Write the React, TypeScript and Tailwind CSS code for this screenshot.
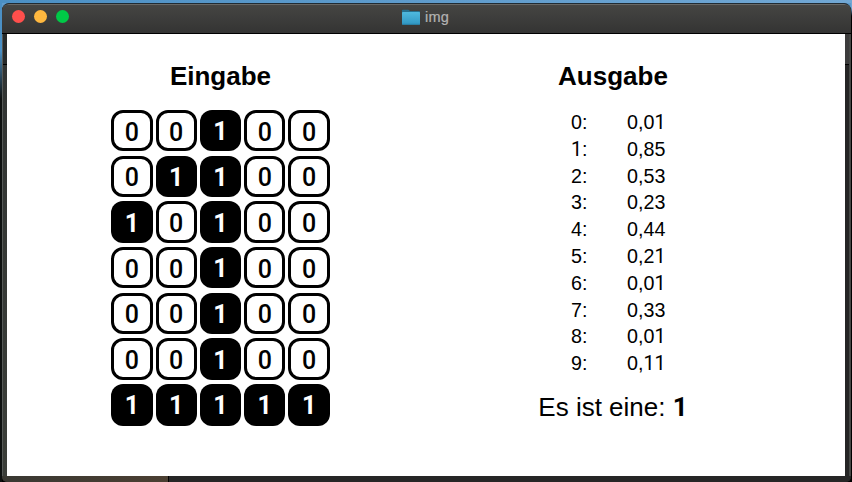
const grid = ["00100", "01100", "10100", "00100", "00100", "00100", "11111"];

const results = ["0,01", "0,85", "0,53", "0,23", "0,44", "0,21", "0,01", "0,33", "0,01", "0,11"];

function FolderIcon() {
  return (
    <svg width="18" height="16" viewBox="0 0 18 16" className="shrink-0">
      <defs>
        <linearGradient id="folder" x1="0" y1="0" x2="0" y2="1">
          <stop offset="0" stopColor="#4fb9df" />
          <stop offset="1" stopColor="#3097c3" />
        </linearGradient>
      </defs>
      <path d="M0 1.5Q0 .7.8.7H6.4L8 2.1H17.2Q18 2.1 18 3V6H0Z" fill="#25708f" />
      <rect x="0" y="3" width="18" height="12.7" rx="0.7" fill="url(#folder)" />
      <path d="M0 15.3H18" stroke="#287fa4" strokeWidth="0.8" />
    </svg>
  );
}

function TitleBar() {
  return (
    <header className="flex h-[30px] shrink-0 rounded-t-md border-t border-b border-t-[#686866] border-b-black bg-linear-to-b from-[#454543] to-[#343433]">
      <div className="flex w-[400px] gap-[9px] pt-[5px] pl-[10px]">
        <span className="size-[13px] rounded-full bg-[#ff4f4c]" />
        <span className="size-[13px] rounded-full bg-[#ffb83f]" />
        <span className="size-[13px] rounded-full bg-[#00c947]" />
      </div>
      <div className="flex h-[23px] items-center gap-[5px] text-[14.5px] leading-none text-[#b3b3b2]">
        <FolderIcon />
        <span className="pt-px tracking-[0.2px] [-webkit-text-stroke:0.2px_#b3b3b2]">img</span>
      </div>
    </header>
  );
}

function Cell({ value }: { value: string }) {
  return (
    <div
      className={
        value === "1"
          ? "flex h-[41.4px] w-[41.2px] items-center justify-center rounded-[12px] bg-black pt-[2px] font-[Roboto] text-[25px] leading-none font-bold text-white"
          : "flex h-[41.4px] w-[41.2px] items-center justify-center rounded-[12px] border-3 border-black pt-[3px] font-[Roboto] text-[25px] leading-none font-medium"
      }
    >
      {value}
    </div>
  );
}

/* Sets the figure 1 without a foot serif. */
function Figures({ text }: { text: string }) {
  return text.split("").map((char, i) =>
    char === "1" ? (
      <span key={i} className="font-[Roboto] leading-none">
        1
      </span>
    ) : (
      char
    ),
  );
}

export default function App() {
  return (
    <div className="flex h-[482px] w-[852px] flex-col overflow-hidden bg-black font-['Liberation_Sans',Arial,sans-serif] text-black">
      <div className="h-[3px] shrink-0 bg-linear-to-r from-[#4b90c5] to-[#71a7d4]" />
      <div className="flex min-h-0 flex-1">
        <div className="w-[2px] shrink-0 bg-linear-to-b from-[#4b90c5] from-10% to-[#0d100f] to-20%" />
        <div className="flex min-h-0 flex-1 flex-col bg-linear-to-b from-[#5f9bcc] from-1% to-black to-1%">
          <div className="flex min-h-0 flex-1 flex-col overflow-hidden rounded-t-[7px] rounded-b-[5px] border-t border-[#202b33] bg-[#202020]">
            <TitleBar />
            <div className="flex h-[442px] shrink-0">
              <div className="w-[5px] shrink-0 border-l border-[#555957] bg-linear-to-b from-[#303332] to-[#3b3e39]">
                <div className="h-[31px] border-b border-black bg-[#272a2a]" />
              </div>
              <main className="flex w-[838px] shrink-0 bg-white">
                <section className="flex w-[427px] flex-col items-center pt-[27px]">
                  <h1 className="text-[26px] leading-[30px] font-bold">Eingabe</h1>
                  <div className="mt-[19px] grid grid-cols-5 gap-x-[3.1px] gap-y-[4.3px]">
                    {grid.flatMap((row, y) => row.split("").map((value, x) => <Cell key={`${y}-${x}`} value={value} />))}
                  </div>
                </section>
                <section className="flex w-[358px] flex-col items-center pt-[27px]">
                  <h1 className="text-[26px] leading-[30px] font-bold">Ausgabe</h1>
                  <dl className="mt-[18px] mr-[-19px] grid w-[103px] grid-cols-[56px_47px] auto-rows-[26.8px] text-[19.7px] leading-[26.8px]">
                    {results.map((result, digit) => (
                      <div key={digit} className="contents">
                        <dt>
                          <Figures text={`${digit}:`} />
                        </dt>
                        <dd>
                          <Figures text={result} />
                        </dd>
                      </div>
                    ))}
                  </dl>
                  <p className="mt-[15px] text-[26px] leading-[30px] whitespace-nowrap">
                    Es ist eine: <b className="font-[Roboto] leading-none">1</b>
                  </p>
                </section>
              </main>
              <div className="flex-1 border-r-2 border-[#454745] bg-[#252525]">
                <div className="h-[31px] border-b border-black bg-[#3c3c3c]" />
              </div>
            </div>
            <footer className="flex flex-1">
              <div className="w-[167px] border-r border-black bg-linear-to-r from-[#393832] to-[#4b3f32]" />
              <div className="flex-1 bg-[#262626]" />
            </footer>
          </div>
        </div>
        <div className="w-px shrink-0 bg-linear-to-b from-[#71a7d4] from-1% to-black to-3%" />
      </div>
    </div>
  );
}
